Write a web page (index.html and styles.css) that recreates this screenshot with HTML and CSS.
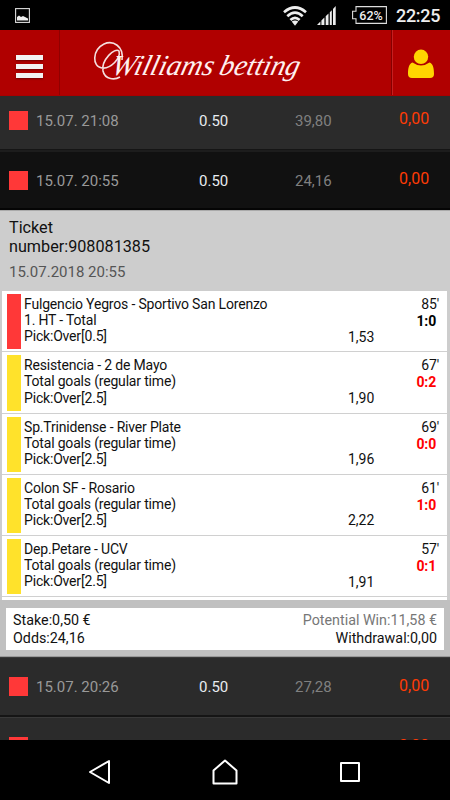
FILE: index.html
```html
<!DOCTYPE html>
<html lang="en">
<head>
    <meta charset="UTF-8">
    <meta name="viewport" content="width=device-width, initial-scale=1.0">
    <title>Williams betting</title>
    <link rel="stylesheet" href="styles.css">
</head>
<body>

<div class="statusbar">
    <svg class="picture" width="15" height="15" viewBox="0 0 15 15">
        <rect x="0.6" y="0.6" width="13.8" height="13.8" fill="none" stroke="#ddd" stroke-width="1.1"/>
        <path d="M2 12.5V9l2-1.5 2 1.5 2-1 2 1 3 1.5v2z" fill="#eee"/>
    </svg>
    <svg class="wifi" width="24" height="20" viewBox="0 0 24 20" fill="none" stroke="#eee" stroke-width="2.7">
        <path d="M1 6.2Q12-3.2 23 6.2M4.3 10.2Q12 3.2 19.7 10.2M7.4 14Q12 9.6 16.6 14"/>
        <path d="M8.7 15.6Q12 13.4 15.3 15.6L12 19.7z" fill="#eee" stroke="none"/>
    </svg>
    <svg class="signal" width="19" height="19" viewBox="0 0 19 19" fill="#eee">
        <path d="M0 19l3.4-3.4V19zM4.4 14.6l3-3V19h-3zM8.7 10.3l2.8-2.8V19H8.7zM12.8 6.2l2-2V19h-2zM16 3l2.7-3v19H16z"/>
    </svg>
    <span class="battery">
        <svg width="35" height="18" viewBox="0 0 35 18" fill="none" stroke="#ddd" stroke-width="1.1">
            <path d="M4 .6h30.4v16.8H4v-4.6H.6V5.2H4z"/>
        </svg>
        <span class="percent">62%</span>
    </span>
    <span class="clock">22:25</span>
</div>

<header>
    <button class="menu" aria-label="Menu">
        <span></span><span></span><span></span>
    </button>
    <div class="logo">
        <svg width="220" height="60" viewBox="0 0 220 60">
            <path class="swash" d="M29 26C31 12 20 6 11 10C-1 16-1 33 9 34C18 35 28 24 26 17C22 13 8 26 10 37C12 46 22 46 27 43"/>
            <g transform="translate(0 41) skewX(-14)">
                <text x="17" y="0" textLength="102" lengthAdjust="spacingAndGlyphs">Williams</text>
                <text x="125" y="0" textLength="80" lengthAdjust="spacingAndGlyphs">betting</text>
            </g>
        </svg>
    </div>
    <button class="user" aria-label="Account">
        <svg width="28" height="30" viewBox="0 0 28 30" fill="#ffd500">
            <circle cx="14" cy="7.8" r="7.2"/>
            <path d="M5.5 13.5Q14 19.5 22.5 13.5C26 14.5 27 19 27 25Q27 29 23 29H5Q1 29 1 25C1 19 2 14.5 5.5 13.5z"/>
        </svg>
    </button>
</header>

<main>
    <div class="row first">
        <span class="mark"></span>
        <span class="date">15.07. 21:08</span>
        <span class="stake">0.50</span>
        <span class="odds">39,80</span>
        <span class="win">0,00</span>
    </div>
    <div class="row open">
        <span class="mark"></span>
        <span class="date">15.07. 20:55</span>
        <span class="stake">0.50</span>
        <span class="odds">24,16</span>
        <span class="win">0,00</span>
    </div>

    <section class="ticket">
        <div class="ticket-head">
            <div class="number">Ticket<br>number:908081385</div>
            <div class="time">15.07.2018 20:55</div>
        </div>
        <div class="events">
            <div class="event lost">
                <div class="info">Fulgencio Yegros - Sportivo San Lorenzo<br>1. HT - Total<br>Pick:Over[0.5]</div>
                <div class="quote">1,53</div>
                <div class="result">85'<b>1:0</b></div>
            </div>
            <div class="event">
                <div class="info">Resistencia - 2 de Mayo<br>Total goals (regular time)<br>Pick:Over[2.5]</div>
                <div class="quote">1,90</div>
                <div class="result">67'<b>0:2</b></div>
            </div>
            <div class="event">
                <div class="info">Sp.Trinidense - River Plate<br>Total goals (regular time)<br>Pick:Over[2.5]</div>
                <div class="quote">1,96</div>
                <div class="result">69'<b>0:0</b></div>
            </div>
            <div class="event">
                <div class="info">Colon SF - Rosario<br>Total goals (regular time)<br>Pick:Over[2.5]</div>
                <div class="quote">2,22</div>
                <div class="result">61'<b>1:0</b></div>
            </div>
            <div class="event">
                <div class="info">Dep.Petare - UCV<br>Total goals (regular time)<br>Pick:Over[2.5]</div>
                <div class="quote">1,91</div>
                <div class="result">57'<b>0:1</b></div>
            </div>
        </div>
        <div class="summary">
            <div class="totals">
                <div>Stake:0,50 €<br>Odds:24,16</div>
                <div class="payout"><span class="potential">Potential Win:11,58 €</span><br>Withdrawal:0,00</div>
            </div>
        </div>
    </section>

    <div class="row">
        <span class="mark"></span>
        <span class="date">15.07. 20:26</span>
        <span class="stake">0.50</span>
        <span class="odds">27,28</span>
        <span class="win">0,00</span>
    </div>
    <div class="row">
        <span class="mark"></span>
        <span class="date"></span>
        <span class="stake"></span>
        <span class="odds"></span>
        <span class="win">0,00</span>
    </div>
</main>

<nav>
    <svg width="24" height="26" viewBox="0 0 24 26" fill="none" stroke="#fff" stroke-width="2" stroke-linejoin="round">
        <path d="M21 2v22L2 13z"/>
    </svg>
    <svg width="26" height="26" viewBox="0 0 26 26" fill="none" stroke="#fff" stroke-width="2" stroke-linejoin="round">
        <path d="M1.5 24.5V11.5L13 1.5l11.5 10v13z"/>
    </svg>
    <svg width="24" height="26" viewBox="0 0 24 26" fill="none" stroke="#fff" stroke-width="2" stroke-linejoin="round">
        <rect x="3" y="4" width="18" height="18"/>
    </svg>
</nav>

</body>
</html>
```
FILE: styles.css
```css
* {
    box-sizing: border-box;
}
body {
    font-family: Roboto, sans-serif;
    margin: 0;
    height: 800px;
    display: flex;
    flex-direction: column;
    overflow: hidden;
    background-color: #000;
}
button {
    border: none;
    padding: 0;
    background: none;
}
.statusbar {
    height: 30px;
    flex: none;
    display: flex;
    align-items: center;
    padding: 0 10px 0 15px;
    color: #eee;
}
.wifi {
    margin-left: auto;
    margin-top: 2px;
}
.signal {
    margin: 1px 16px 0 10px;
}
.battery {
    display: grid;
    place-items: center;
}
.battery svg, .percent {
    grid-area: 1 / 1;
}
.percent {
    font-size: 12.5px;
    font-weight: 500;
    padding-left: 3px;
}
.clock {
    font-size: 18px;
    font-weight: 500;
    width: 44px;
    margin-left: 9px;
    letter-spacing: -0.3px;
}
header {
    height: 66px;
    flex: none;
    display: flex;
    background-color: #b00000;
    border-bottom: 1px solid #a80000;
}
.menu {
    width: 60px;
    padding: 7px 0 0 16px;
    border-right: 1px solid #900000;
    display: flex;
    flex-direction: column;
    justify-content: center;
    gap: 4px;
}
.menu span {
    width: 27px;
    height: 5px;
    background-color: #f2f2f2;
    box-shadow: 0 1px 2px #700000;
}
.logo {
    flex: 1;
    padding: 4px 0 0 33px;
}
.logo text {
    font-family: "Liberation Serif", serif;
    font-style: italic;
    font-size: 29px;
    fill: #fff0f0;
}
.logo .swash {
    fill: none;
    stroke: #f5dede;
    stroke-width: 1.6;
}
.user {
    width: 59px;
    border-left: 1px solid #850000;
    box-shadow: inset 1px 0 #c42020;
    padding-top: 6px;
}
main {
    height: 644px;
    flex: none;
    overflow: hidden;
}
.row {
    height: 60px;
    display: flex;
    align-items: center;
    padding-left: 9px;
    font-size: 15px;
    background-color: #2b2b2b;
    border-top: 1px solid #393939;
    border-bottom: 2px solid #151515;
}
.row.first {
    margin-top: -6px;
    border-bottom-width: 1px;
}
.row.open {
    background-color: #111;
    border-top: 2px solid #1d1d1d;
    border-bottom: 2px solid #050505;
}
.mark {
    width: 19px;
    height: 19px;
    background-color: #ff3838;
    margin-right: 8px;
}
.date, .stake, .odds {
    padding-top: 1px;
}
.date {
    width: 163px;
    color: #999;
}
.stake {
    width: 96px;
    color: #e8ecf0;
}
.odds {
    width: 104px;
    color: #808080;
}
.win {
    font-size: 16px;
    color: #ff3b05;
    padding-bottom: 3px;
}
.ticket {
    height: 447px;
    background-color: #cdcdcd;
    border-top: 1px solid #aaa;
}
.ticket-head {
    height: 80px;
    padding: 7px 9px 0;
}
.number {
    font-size: 16.2px;
    line-height: 19px;
    color: #111;
}
.time {
    margin-top: 7px;
    font-size: 15px;
    line-height: 18px;
    color: #555;
}
.events {
    margin: 0 3px 0 2px;
    background-color: #fff;
    height: 309px;
}
.event {
    height: 61.25px;
    display: flex;
    padding: 3px 8px 2px 5px;
    border-bottom: 1px solid #d0d0d0;
    font-size: 14px;
    letter-spacing: -0.18px;
    line-height: 16.2px;
    color: #111;
}
.info {
    flex: 1;
    border-left: 14px solid #ffe22b;
    padding: 2px 0 0 3px;
}
.lost .info {
    border-color: #ff3838;
}
.quote {
    padding-top: 34.5px;
    width: 52px;
    letter-spacing: 0;
}
.result {
    width: 39px;
    padding-top: 2px;
    text-align: right;
}
.result b {
    display: block;
    color: #f00;
    padding-right: 3px;
    margin-top: 1px;
}
.lost b {
    color: #000;
}
.summary {
    height: 57px;
    padding: 8px 6px 7px;
    background-color: #c0c0c0;
    border-bottom: 1px solid #999;
}
.totals {
    height: 42px;
    display: flex;
    justify-content: space-between;
    padding: 4px 7px;
    background-color: #fff;
    font-size: 14.3px;
    line-height: 17.5px;
    color: #111;
}
.payout {
    text-align: right;
}
.potential {
    color: #777;
}
nav {
    flex: 1;
    display: flex;
    align-items: center;
    justify-content: center;
    gap: 100px;
    padding-top: 4px;
}
```
